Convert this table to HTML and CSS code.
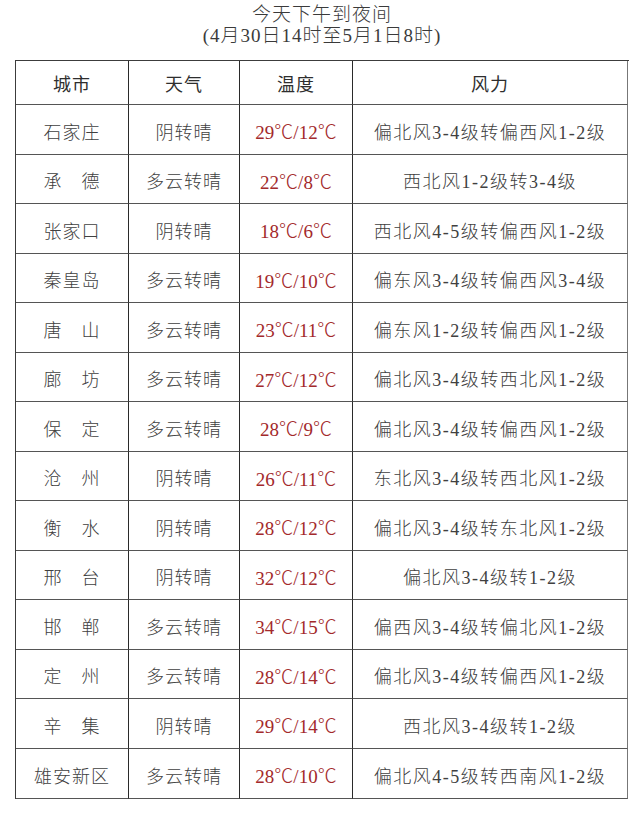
FILE: index.html
```html
<!DOCTYPE html>
<html lang="zh-CN">
<head>
<meta charset="utf-8">
<title>今天下午到夜间</title>
<link rel="stylesheet" href="styles.css">
</head>
<body>
<div class="page">
  <div class="title">
    <div class="title-line">今天下午到夜间</div>
    <div class="title-line">(4月30日14时至5月1日8时)</div>
  </div>
  <div class="table">
    <div class="cell head">城市</div><div class="cell head">天气</div><div class="cell head">温度</div><div class="cell head">风力</div>
    <div class="cell">石家庄</div><div class="cell">阴转晴</div><div class="cell temp">29℃/12℃</div><div class="cell wind">偏北风3-4级转偏西风1-2级</div>
    <div class="cell">承　德</div><div class="cell">多云转晴</div><div class="cell temp">22℃/8℃</div><div class="cell wind">西北风1-2级转3-4级</div>
    <div class="cell">张家口</div><div class="cell">阴转晴</div><div class="cell temp">18℃/6℃</div><div class="cell wind">西北风4-5级转偏西风1-2级</div>
    <div class="cell">秦皇岛</div><div class="cell">多云转晴</div><div class="cell temp">19℃/10℃</div><div class="cell wind">偏东风3-4级转偏西风3-4级</div>
    <div class="cell">唐　山</div><div class="cell">多云转晴</div><div class="cell temp">23℃/11℃</div><div class="cell wind">偏东风1-2级转偏西风1-2级</div>
    <div class="cell">廊　坊</div><div class="cell">多云转晴</div><div class="cell temp">27℃/12℃</div><div class="cell wind">偏北风3-4级转西北风1-2级</div>
    <div class="cell">保　定</div><div class="cell">多云转晴</div><div class="cell temp">28℃/9℃</div><div class="cell wind">偏北风3-4级转偏西风1-2级</div>
    <div class="cell">沧　州</div><div class="cell">阴转晴</div><div class="cell temp">26℃/11℃</div><div class="cell wind">东北风3-4级转西北风1-2级</div>
    <div class="cell">衡　水</div><div class="cell">阴转晴</div><div class="cell temp">28℃/12℃</div><div class="cell wind">偏北风3-4级转东北风1-2级</div>
    <div class="cell">邢　台</div><div class="cell">阴转晴</div><div class="cell temp">32℃/12℃</div><div class="cell wind">偏北风3-4级转1-2级</div>
    <div class="cell">邯　郸</div><div class="cell">多云转晴</div><div class="cell temp">34℃/15℃</div><div class="cell wind">偏西风3-4级转偏北风1-2级</div>
    <div class="cell">定　州</div><div class="cell">多云转晴</div><div class="cell temp">28℃/14℃</div><div class="cell wind">偏北风3-4级转偏西风1-2级</div>
    <div class="cell">辛　集</div><div class="cell">阴转晴</div><div class="cell temp">29℃/14℃</div><div class="cell wind">西北风3-4级转1-2级</div>
    <div class="cell">雄安新区</div><div class="cell">多云转晴</div><div class="cell temp">28℃/10℃</div><div class="cell wind">偏北风4-5级转西南风1-2级</div>
  </div>
</div>
</body>
</html>
```

FILE: styles.css
```css
html, body {
  margin: 0;
  padding: 0;
  background: #ffffff;
}

.page {
  width: 640px;
  height: 827px;
  font-family: "Liberation Serif", "Noto Sans CJK SC", serif;
  color: #3a3a3a;
}

.title {
  padding-top: 4px;
  display: flex;
  flex-direction: column;
  align-items: center;
  font-size: 19px;
  font-weight: 300;
  line-height: 21px;
  padding-left: 4px;
}

.title-line {
  white-space: nowrap;
  letter-spacing: 1px;
}

.table {
  margin: 14px 0 0 15px;
  width: 613px;
  display: grid;
  grid-template-columns: 113px 111px 113px 275px;
  grid-template-rows: 44px repeat(13, 49.5px) 50px;
  border-left: 1px solid #3c3c3c;
  border-top: 1px solid #3c3c3c;
}

.cell {
  border-right: 1px solid #2a2a2a;
  border-bottom: 1px solid #555555;
  display: flex;
  align-items: center;
  justify-content: center;
  font-size: 18px;
  font-weight: 300;
  letter-spacing: 1px;
  white-space: nowrap;
  padding-top: 3px;
  box-sizing: border-box;
  color: #404040;
}

.cell:nth-child(4n) {
  border-right-color: #777777;
}

.head {
  padding-top: 0;
  font-weight: 400;
  color: #2e2e2e;
}

.temp {
  color: #a3292b;
  font-size: 19px;
  letter-spacing: 0;
}

.wind {
  font-size: 18px;
  letter-spacing: 1.5px;
}
```
